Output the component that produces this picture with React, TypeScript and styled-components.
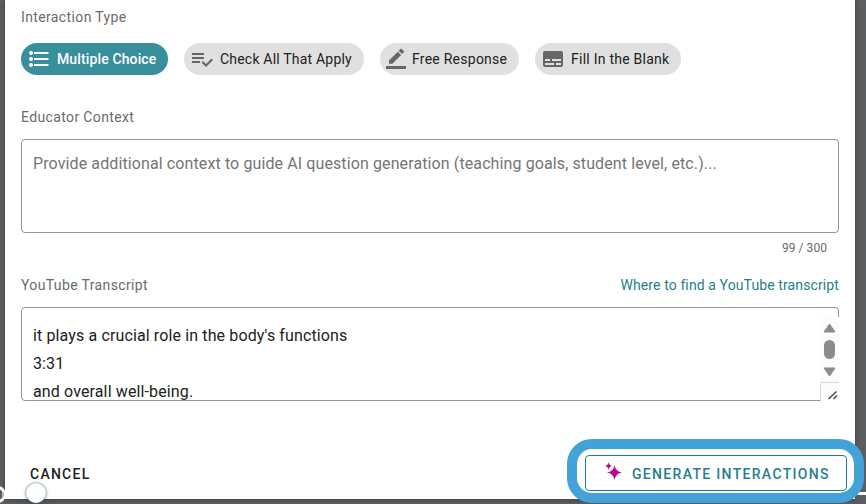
import React from "react";
import styled, { createGlobalStyle } from "styled-components";

const GlobalStyle = createGlobalStyle`
  * { box-sizing: border-box; }
  body { margin: 0; overflow: hidden; background: #5d5e60; font-family: Roboto, "Liberation Sans", sans-serif; }
`;

const Backdrop = styled.div`
  position: relative;
  width: 866px;
  height: 504px;
  overflow: hidden;
  background: #5d5e60;
  padding-left: 5px;
`;

const Dialog = styled.main`
  width: 850px;
  height: 499px;
  padding: 8px 16px 0;
  background: #fff;
  display: flex;
  flex-direction: column;
  box-shadow: 0 1px 5px rgba(0, 0, 0, 0.35);
`;

const Label = styled.div`
  height: 18px;
  font-size: 14px;
  line-height: 18px;
  letter-spacing: 0.37px;
  color: #6b6b6b;
  white-space: nowrap;
`;

const Chips = styled.div`
  display: flex;
  gap: 16px;
  margin: 17px 0 33px;
`;

const Chip = styled.button<{ $width: number; $active?: boolean; $spacing: number; $iconGap?: number }>`
  display: flex;
  align-items: center;
  width: ${(p) => p.$width}px;
  height: 32px;
  padding: 0 0 0 6px;
  border: 0;
  border-radius: 16px;
  background: ${(p) => (p.$active ? "#388f9b" : "#e0e0e0")};
  color: ${(p) => (p.$active ? "#fff" : "#212121")};
  font: ${(p) => (p.$active ? 500 : 400)} 14px/20px Roboto, sans-serif;
  letter-spacing: ${(p) => p.$spacing}px;
  white-space: nowrap;
  svg { flex: none; width: 24px; height: 24px; margin-right: ${(p) => p.$iconGap ?? 6}px; color: ${(p) => (p.$active ? "#fff" : "#666")}; }
`;

const Field = styled.div`
  position: relative;
  height: 94px;
  margin-top: 13px;
  border: 1px solid #949494;
  border-radius: 4px;
  overflow: hidden;
  padding: 10px 11px;
  font-size: 16px;
  line-height: 28px;
  white-space: nowrap;
`;

const Placeholder = styled.div`
  color: #757575;
  letter-spacing: 0.108px;
`;

const Transcript = styled.div`
  margin-top: 4px;
  color: #212121;
  letter-spacing: 0.125px;
`;

const Counter = styled.div`
  height: 16px;
  margin: 7px 12px 20px 0;
  text-align: right;
  font-size: 12px;
  line-height: 16px;
  letter-spacing: 0.05px;
  color: #6b6b6b;
`;

const LabelRow = styled.div`
  display: flex;
  justify-content: space-between;
`;

const HelpLink = styled.a`
  font-size: 14px;
  line-height: 18px;
  letter-spacing: 0.11px;
  color: #1f7f8b;
  white-space: nowrap;
`;

const FieldWrap = styled.div`
  position: relative;
`;

const Scrollbar = styled.div`
  position: absolute;
  right: 0;
  top: 23px;
  width: 19px;
  height: 84px;
  background: #fcfcfc;
  svg { display: block; }
`;

const Actions = styled.footer`
  display: flex;
  align-items: center;
  justify-content: space-between;
  height: 38px;
  margin: 53px -8px 0 9px;
`;

const Cancel = styled.button`
  padding: 2px 0 0;
  border: 0;
  background: none;
  color: #212121;
  font: 500 14px/20px Roboto, sans-serif;
  letter-spacing: 1.25px;
`;

const Generate = styled.button`
  position: relative;
  z-index: 2;
  display: flex;
  align-items: center;
  width: 262px;
  height: 36px;
  padding: 0 0 0 19px;
  border: 1px solid #1f7f8b;
  border-radius: 4px;
  background: #fff;
  color: #1f7f8b;
  font: 500 14px/20px Roboto, sans-serif;
  letter-spacing: 1.32px;
  white-space: nowrap;
  svg { flex: none; margin: 0 9px 2px 0; }
  span { padding-top: 2px; }
`;

const Highlight = styled.div`
  position: absolute;
  z-index: 1;
  left: 567px;
  top: 439px;
  width: 297px;
  height: 64px;
  border: 10px solid #43a3d9;
  border-radius: 25px;
  background: #fff;
`;

const SliderThumb = styled.div`
  position: absolute;
  left: 26px;
  top: 483px;
  width: 20px;
  height: 20px;
  border-radius: 50%;
  background: #fff;
  box-shadow: 0 0 2px #39818a, 0 1px 4px rgba(0, 0, 0, 0.35);
`;

const EdgeBadge = styled.div`
  position: absolute;
  left: -11px;
  top: 486px;
  width: 17px;
  height: 17px;
  border: 3px solid #fff;
  border-radius: 50%;
  background: #5d5e60;
  &::after {
    content: "";
    position: absolute;
    right: -1px;
    top: 3px;
    width: 2px;
    height: 5px;
    border-radius: 2px;
    background: #bbb;
  }
`;

const SliderTrack = styled.div`
  position: absolute;
  left: 855px;
  top: 492px;
  width: 11px;
  height: 3px;
  background: #fff;
`;

const ListIcon = () => (
  <svg viewBox="0 0 24 24" fill="currentColor">
    <circle cx="4" cy="6" r="2" /><circle cx="4" cy="12" r="2" /><circle cx="4" cy="18" r="2" />
    <path d="M7 5h14.500v2H7zM7 11h14.500v2H7zM7 17h14.500v2H7z" />
  </svg>
);

const CheckListIcon = () => (
  <svg viewBox="0 0 24 24" fill="currentColor">
    <path d="M14 10H2v2h12zM14 6H2v2h12zM2 16h8v-2H2zM21.5 11.5L23 13l-7 7-4.5-4.5L13 14l3 3z" />
  </svg>
);

const PencilIcon = () => (
  <svg viewBox="0 0 24 24" fill="currentColor">
    <path d="M17.75 7L14 3.25l-10 10V17h3.75zM20.71 4.04a1 1 0 0 0 0-1.41L18.37.29a1 1 0 0 0-1.41 0L15 2.25 18.75 6z" transform="translate(-.5 1.800) scale(.88)" />
    <path d="M0 19h20v3H0z" />
  </svg>
);

const BlankIcon = () => (
  <svg viewBox="0 0 24 24" fill="currentColor" fillRule="evenodd">
    <path d="M4 4h16a2 2 0 0 1 2 2v12a2 2 0 0 1-2 2H4a2 2 0 0 1-2-2V6a2 2 0 0 1 2-2ZM4 12v2h5v-2zm7 0v2h9v-2zM4 16v2h9v-2zm11 0v2h5v-2z" />
  </svg>
);

const chips = [
  { label: "Multiple Choice", width: 147, spacing: 0.13, active: true, icon: <ListIcon /> },
  { label: "Check All That Apply", width: 180, spacing: 0.2, icon: <CheckListIcon /> },
  { label: "Free Response", width: 139, spacing: 0.25, iconGap: 2, icon: <PencilIcon /> },
  { label: "Fill In the Blank", width: 146, spacing: 0.25, icon: <BlankIcon /> },
];

export default function App() {
  return (
    <Backdrop>
      <GlobalStyle />
      <Dialog>
        <Label>Interaction Type</Label>
        <Chips>
          {chips.map((c) => (
            <Chip key={c.label} $width={c.width} $spacing={c.spacing} $active={c.active} $iconGap={c.iconGap}>
              {c.icon}
              {c.label}
            </Chip>
          ))}
        </Chips>
        <Label>Educator Context</Label>
        <Field>
          <Placeholder>Provide additional context to guide AI question generation (teaching goals, student level, etc.)...</Placeholder>
        </Field>
        <Counter>99 / 300</Counter>
        <LabelRow>
          <Label>YouTube Transcript</Label>
          <HelpLink>Where to find a YouTube transcript</HelpLink>
        </LabelRow>
        <FieldWrap>
          <Field>
            <Transcript>
              <div>it plays a crucial role in the body's functions</div>
              <div>3:31</div>
              <div>and overall well-being.</div>
            </Transcript>
          </Field>
          <Scrollbar>
            <svg width="19" height="84" viewBox="0 0 19 84" fill="#8b8b8b">
              <path d="M9.5 7L15 15H4Z" stroke="#8b8b8b" strokeLinejoin="round" />
              <rect x="4" y="23" width="11" height="19" rx="5.5" />
              <path d="M4 51h11L9.5 59Z" stroke="#8b8b8b" strokeLinejoin="round" />
              <path d="M.5 84V65.5H19" fill="none" stroke="#d8d8d8" />
              <path d="M8.5 82l8-7.500M13.500 82l3.500-3.500" fill="none" stroke="#444" strokeWidth="1.400" />
            </svg>
          </Scrollbar>
        </FieldWrap>
        <Actions>
          <Cancel>CANCEL</Cancel>
          <Generate>
            <svg width="18" height="20" viewBox="0 0 18 20" fill="#c0058a">
              <path d="M9.500 3Q10.500 9.500 17 10.500Q10.500 11.500 9.500 18Q8.500 11.500 2 10.500Q8.500 9.500 9.500 3Z" />
              <path d="M3.500 0Q4 3.500 7 4Q4 4.500 3.500 8Q3 4.500 0 4Q3 3.500 3.500 0Z" />
            </svg>
            <span>GENERATE INTERACTIONS</span>
          </Generate>
        </Actions>
      </Dialog>
      <SliderTrack />
      <Highlight />
      <EdgeBadge />
      <SliderThumb />
    </Backdrop>
  );
}
